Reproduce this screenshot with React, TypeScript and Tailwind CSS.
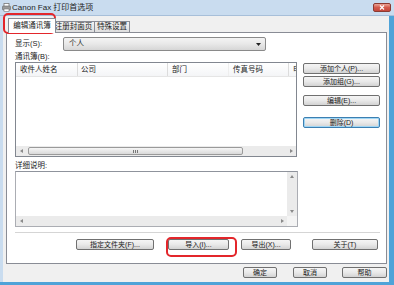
import React from "react";

const FONT = "font-['Liberation_Sans','Noto_Sans_CJK_SC',sans-serif]";

function Btn({ label, className = "", focus = false }: { label: string; className?: string; focus?: boolean }) {
  return (
    <div
      className={`flex h-[11px] shrink-0 items-center justify-center whitespace-nowrap rounded-[2px] border bg-linear-to-b from-[#f5f5f5] via-[#e9e9e9] to-[#d3d3d3] text-[7px] leading-none text-[#1a1a1a] ${
        focus ? "border-[#3c7fb1] shadow-[inset_0_0_0_1px_#9fd6f5]" : "border-[#707070]"
      } ${className}`}
    >
      {label}
    </div>
  );
}

function Arrow({ dir }: { dir: "l" | "r" | "u" | "d" }) {
  const pts = {
    l: "3,0 0,2 3,4",
    r: "0,0 3,2 0,4",
    u: "0,3 2,0 4,3",
    d: "0,0 4,0 2,3",
  }[dir];
  const vertical = dir === "u" || dir === "d";
  return (
    <svg width={vertical ? 4 : 3} height={vertical ? 3 : 4} viewBox={vertical ? "0 0 4 3" : "0 0 3 4"}>
      <polygon points={pts} fill="#8a8a8a" />
    </svg>
  );
}

function HScroll({ thumb }: { thumb: boolean }) {
  return (
    <div className="flex h-[10px] shrink-0 items-center bg-[#ebebeb]">
      <div className="flex w-[10px] justify-center">
        <Arrow dir="l" />
      </div>
      <div className="flex h-full flex-1 items-center py-[1px] pl-[2px] pr-[44px]">
        {thumb && (
          <div className="flex h-full flex-1 items-center justify-center rounded-[2px] border border-[#9a9a9a] bg-linear-to-b from-[#f6f6f6] to-[#d9d9d9]">
            <div className="flex gap-[1px]">
              <div className="h-[3px] w-px bg-[#777]" />
              <div className="h-[3px] w-px bg-[#777]" />
              <div className="h-[3px] w-px bg-[#777]" />
            </div>
          </div>
        )}
      </div>
      <div className="flex w-[9px] justify-center">
        <Arrow dir="r" />
      </div>
    </div>
  );
}

function Tab({ label, className = "" }: { label: string; className?: string }) {
  return (
    <div
      className={`flex h-[11px] shrink-0 items-center justify-center border border-b-0 border-[#898c95] bg-linear-to-b from-[#f2f2f2] to-[#dedede] text-[7.5px] leading-none text-[#1a1a1a] ${className}`}
    >
      {label}
    </div>
  );
}

export default function App() {
  return (
    <div className={`relative flex h-[285px] w-[394px] flex-col overflow-hidden bg-[#c9dcef] ${FONT}`}>
      {/* title bar */}
      <div className="flex h-[16px] shrink-0 items-center border-b border-[#a7bfd9]">
        <svg width="9" height="9" viewBox="0 0 9 9" className="ml-[2px]">
          <rect x="2" y="0.5" width="5" height="3" fill="#fff" stroke="#777" strokeWidth="0.8" />
          <rect x="0.5" y="3" width="8" height="4" rx="0.8" fill="#9a9a9a" stroke="#666" strokeWidth="0.6" />
          <rect x="2" y="6" width="5" height="2.5" fill="#fff" stroke="#777" strokeWidth="0.6" />
        </svg>
        <div className="ml-[1px] text-[8px] leading-none text-[#1e1e1e]">Canon Fax 打印首选项</div>
        <div className="ml-auto mr-[3px] flex h-[9px] w-[18px] items-center justify-center rounded-[2px] border border-[#8b3a32] bg-linear-to-b from-[#e9a497] via-[#d35a4c] to-[#c4473b]">
          <svg width="6" height="5" viewBox="0 0 6 5">
            <path d="M1 0.5 L5 4.5 M5 0.5 L1 4.5" stroke="#fff" strokeWidth="1.2" />
          </svg>
        </div>
      </div>

      {/* window body */}
      <div className="ml-[3px] mr-[5px] flex flex-1 flex-col bg-[#f0f0f0]">
        {/* tabs */}
        <div className="flex h-[16px] shrink-0 items-end pl-[5px]">
          <div className="relative z-10 -mb-px flex h-[15px] w-[48px] shrink-0 items-center justify-center border border-b-0 border-[#898c95] bg-white text-[7.5px] leading-none text-[#1a1a1a]">
            编辑通讯簿
          </div>
          <Tab label="注册封面页" className="-ml-[4px] w-[43px]" />
          <Tab label="特殊设置" className="-ml-px w-[36px]" />
        </div>

        {/* tab panel */}
        <div className="ml-[3px] mr-[2px] flex h-[232px] shrink-0 flex-col border border-[#898c95] bg-white pl-[8px] text-[7.5px] leading-none text-[#1a1a1a]">
          <div className="mt-[4px] flex h-[14px] items-center">
            <div className="w-[48px]">显示(S):</div>
            <div className="flex h-full w-[203px] items-center rounded-[2px] border border-[#8a8a8a] bg-linear-to-b from-[#f4f4f4] via-[#e8e8e8] to-[#d6d6d6] pl-[5px] pr-[4px]">
              <span>个人</span>
              <svg width="5" height="3" viewBox="0 0 5 3" className="ml-auto">
                <polygon points="0,0 5,0 2.5,3" fill="#222" />
              </svg>
            </div>
          </div>

          <div className="mt-[1px] flex h-[9px] items-center">通讯簿(B):</div>

          <div className="mt-[1px] flex">
            {/* address list */}
            <div className="flex h-[95px] w-[282px] flex-col overflow-hidden border border-[#828790] bg-white">
              <div className="flex h-[14px] shrink-0 items-stretch overflow-hidden border-b border-[#e5e5e5] bg-linear-to-b from-white to-[#f4f5f7]">
                <div className="flex w-[61px] shrink-0 items-center pl-[4px]">收件人姓名</div>
                <div className="w-px shrink-0 bg-[#dcdcdc]" />
                <div className="flex w-[89px] shrink-0 items-center pl-[3px]">公司</div>
                <div className="w-px shrink-0 bg-[#dcdcdc]" />
                <div className="flex w-[60px] shrink-0 items-center pl-[4px]">部门</div>
                <div className="w-px shrink-0 bg-[#eeeeee]" />
                <div className="flex w-[59px] shrink-0 items-center pl-[4px]">传真号码</div>
                <div className="w-px shrink-0 bg-[#dcdcdc]" />
                <div className="flex shrink-0 items-center pl-[4px]">电子邮件</div>
              </div>
              <div className="flex-1" />
              <HScroll thumb />
            </div>

            {/* side buttons */}
            <div className="ml-[6px] flex w-[77px] flex-col">
              <Btn label="添加个人(P)..." className="mt-px" />
              <Btn label="添加组(G)..." className="mt-[2px]" />
              <Btn label="编辑(E)..." className="mt-[8px]" />
              <Btn label="删除(D)" focus className="mt-[11px]" />
            </div>
          </div>

          <div className="mt-[4px] flex h-[9px] items-center">详细说明:</div>

          {/* detail box */}
          <div className="mt-px flex h-[56px] w-[283px] border border-[#abadb3] border-t-[#8f939c] bg-white">
            <div className="flex flex-1 flex-col">
              <div className="flex-1" />
              <HScroll thumb={false} />
            </div>
            <div className="flex w-[10px] flex-col bg-[#ebebeb]">
              <div className="flex h-[9px] items-center justify-center">
                <Arrow dir="u" />
              </div>
              <div className="flex-1" />
              <div className="flex h-[9px] items-center justify-center">
                <Arrow dir="d" />
              </div>
              <div className="h-[10px] bg-[#f4f4f4]" />
            </div>
          </div>

          <div className="mr-[6px] mt-[5px] h-px bg-[#d5d5d5]" />

          <div className="mt-[6px] flex">
            <Btn label="指定文件夹(F)..." className="ml-[61px] w-[78px]" />
            <Btn label="导入(I)..." className="ml-[14px] w-[61px]" />
            <Btn label="导出(X)..." className="ml-[12px] w-[50px]" />
            <Btn label="关于(T)" className="ml-[21px] w-[66px]" />
          </div>
        </div>

        {/* dialog buttons */}
        <div className="mt-[3px] flex justify-end pr-[2px]">
          <Btn label="确定" className="w-[34px]" />
          <Btn label="取消" className="ml-[16px] w-[34px]" />
          <Btn label="帮助" className="ml-[15px] w-[45px]" />
        </div>
      </div>
      <div className="absolute bottom-0 left-0 right-0 h-[3px] bg-[#4fa3d8]" />
      <div className="absolute bottom-0 right-0 top-[16px] w-[5px] bg-[#4fa3d8]" />

      {/* red highlight marks */}
      <div className="absolute left-[3px] top-[13px] h-[21px] w-[53px] rounded-[5px] border-2 border-[#e3262b]" />
      <div className="absolute left-[166px] top-[237px] h-[20px] w-[71px] rounded-[5px] border-2 border-[#e3262b]" />
    </div>
  );
}
